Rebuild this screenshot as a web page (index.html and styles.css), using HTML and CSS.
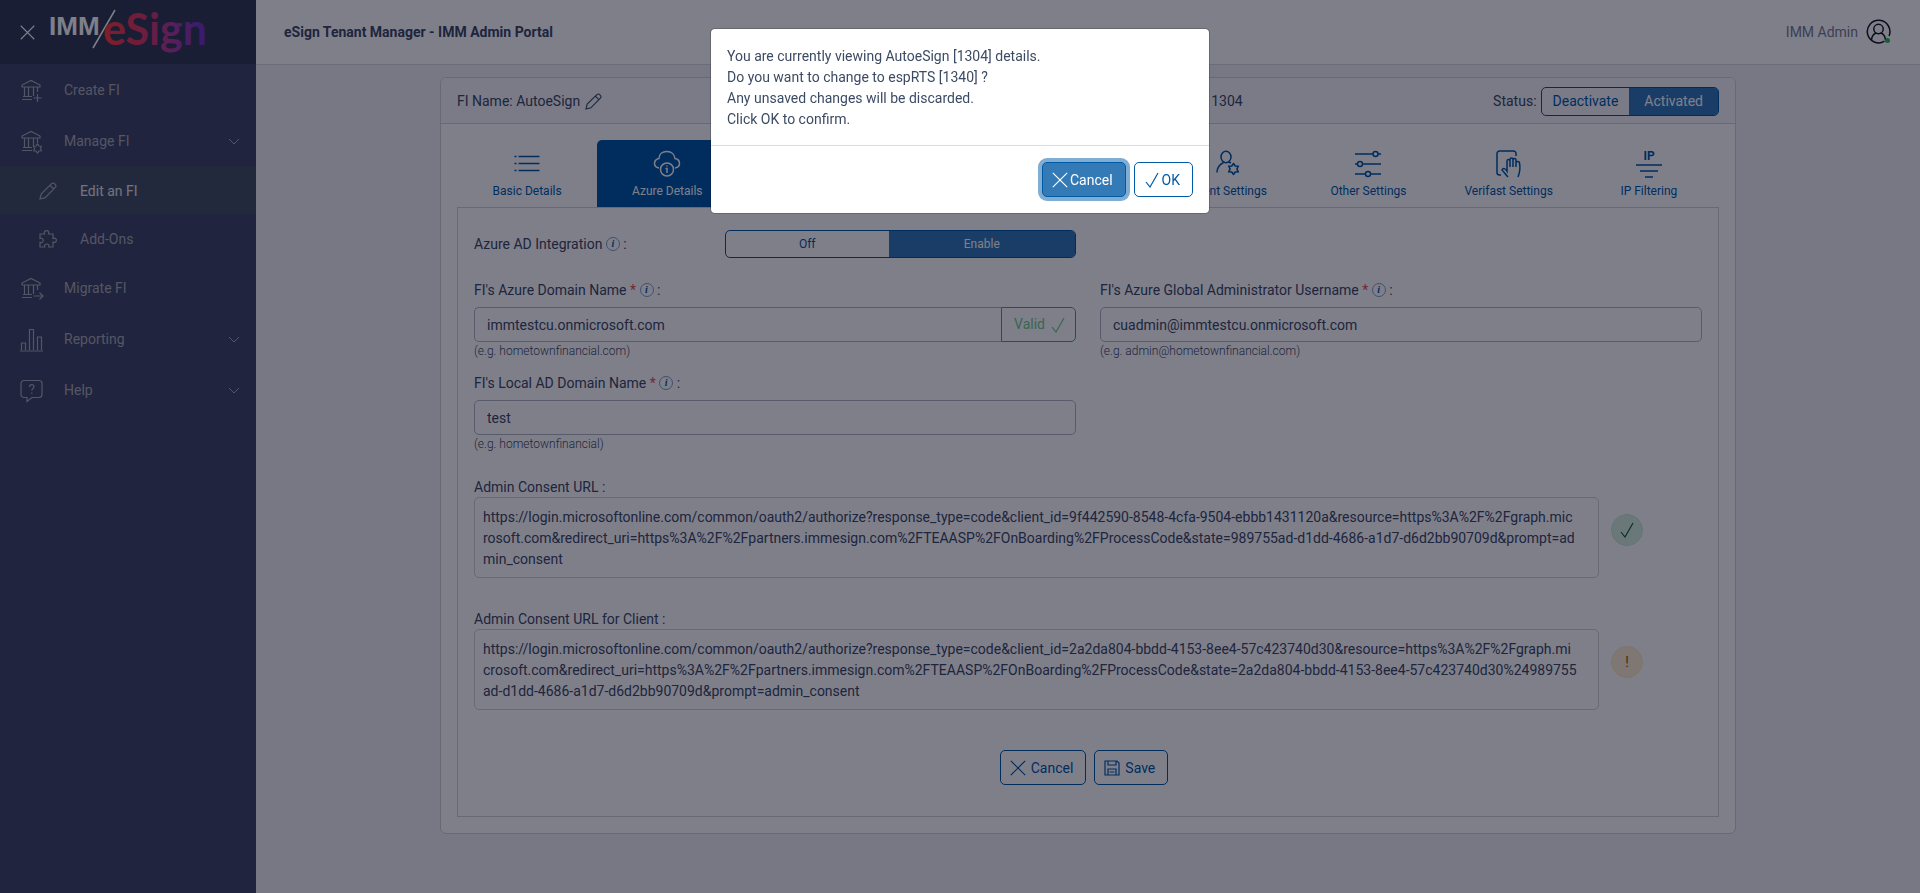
FILE: index.html
```html
<!DOCTYPE html>
<html lang="en">
<head>
<meta charset="utf-8">
<title>eSign Tenant Manager - IMM Admin Portal</title>
<link rel="stylesheet" href="styles.css">
</head>
<body>
<svg class="sprite" aria-hidden="true">
  <symbol id="bank" viewBox="0 0 24 24"><path d="M2 7.500V6L11 1.500 20 6v2H2zM4.500 8v9M8.500 8v9M13.500 8v9M17.500 8v5M2 20.500h10M3 17.500h9"/></symbol>
  <symbol id="gear" viewBox="-6 -6 12 12"><path d="M0-5L1.600-2.800 4.300-2.500 3.200 0 4.300 2.500 1.600 2.800 0 5-1.600 2.800-4.300 2.500-3.200 0-4.300-2.500-1.600-2.800z"/></symbol>
  <symbol id="pencil" viewBox="0 0 18 18"><path d="M1 17l1.300-5.200L12.600 1.700a2 2 0 0 1 2.900 0l.8.800a2 2 0 0 1 0 2.900L6.200 15.700zM11 3.300l3.700 3.700"/></symbol>
  <symbol id="cross" viewBox="0 0 16 16"><path d="M.8.8l14.400 14.400M15.200.8L.8 15.200"/></symbol>
  <symbol id="check" viewBox="0 0 16 16"><path d="M2 10l4 5L14 1"/></symbol>
  <symbol id="chevron" viewBox="0 0 12 8"><path d="M1 1l5 5 5-5"/></symbol>
</svg>
<div class="app">
  <aside class="sidebar">
    <div class="brand">
      <button class="icon-button" type="button" aria-label="Close menu"><svg class="icon icon-close"><use href="#cross"/></svg></button>
      <svg class="logo" viewBox="0 0 160 64" role="img" aria-label="IMM eSign">
        <defs><linearGradient id="g" gradientUnits="userSpaceOnUse" x1="56" y1="0" x2="156" y2="0"><stop offset="0" stop-color="#ff3d3d"/><stop offset=".35" stop-color="#dc3a63"/><stop offset=".65" stop-color="#b0409e"/><stop offset="1" stop-color="#6a35d0"/></linearGradient></defs>
        <text class="logo-imm" x="-2" y="35">IMM</text>
        <path class="logo-slash" d="M64 10L42 48"/>
        <text class="logo-esign" x="52" y="45" fill="url(#g)">eSign</text>
      </svg>
    </div>
    <nav class="menu">
      <a class="menu-item" href="#"><svg class="icon menu-icon" viewBox="0 0 24 24"><use href="#bank"/><path d="M17.500 15v8M13.500 19h8"/></svg><span>Create FI</span></a>
      <a class="menu-item" href="#"><svg class="icon menu-icon" viewBox="0 0 24 24"><use href="#bank"/><use href="#gear" x="12" y="13" width="11" height="11"/></svg><span>Manage FI</span><svg class="icon chevron"><use href="#chevron"/></svg></a>
      <a class="menu-item sub active" href="#"><svg class="icon sub-icon"><use href="#pencil"/></svg><span>Edit an FI</span></a>
      <a class="menu-item sub" href="#"><svg class="icon sub-icon" viewBox="0 0 18 18"><path d="M1 4h4.500C4.500 1.500 6 .6 7.500.6S10.500 1.500 9.500 4H14v4.500c2.500-1 3.400.5 3.400 1.700S16.500 13 14 12v5H9.800c.8-2-.5-3-2-3s-3 1-2 3H1v-4.700c2 .8 3.200-.4 3.200-1.900S3 7.700 1 8.500z"/></svg><span>Add-Ons</span></a>
      <a class="menu-item" href="#"><svg class="icon menu-icon" viewBox="0 0 24 24"><use href="#bank"/><path d="M13.500 19h9M19.500 15.500L23 19l-3.500 3.500"/></svg><span>Migrate FI</span></a>
      <a class="menu-item" href="#"><svg class="icon menu-icon" viewBox="0 0 24 24"><path d="M0 23h23M1.500 22v-7h4v7M9.500 22V1.500h4V22M17.500 22V9h4v13"/></svg><span>Reporting</span><svg class="icon chevron"><use href="#chevron"/></svg></a>
      <a class="menu-item" href="#"><svg class="icon menu-icon" viewBox="0 0 24 24"><path d="M4 1.500h15a3 3 0 0 1 3 3v11a3 3 0 0 1-3 3h-7l-5 4v-4H4a3 3 0 0 1-3-3v-11a3 3 0 0 1 3-3zM9.500 8c0-3.400 4.500-3 4.500-.5 0 2-2.200 2-2.200 4M11.800 13.500V15"/></svg><span>Help</span><svg class="icon chevron"><use href="#chevron"/></svg></a>
    </nav>
  </aside>
  <div class="main">
    <header class="topbar">
      <h1 class="title">eSign Tenant Manager - IMM Admin Portal</h1>
      <div class="user"><span>IMM Admin</span>
        <svg class="avatar" viewBox="0 0 26 26"><path d="M18.500 22.200A11.300 11.300 0 1 1 23 17"/><circle cx="12.500" cy="10" r="4.700"/><path d="M5.500 21c.5-4.500 2.500-6.500 5-7M19.500 21c-.5-4.500-2.500-6.500-5-7"/><circle class="online" cx="21.500" cy="21.500" r="2.500"/></svg>
      </div>
    </header>
    <main class="content">
      <section class="card">
        <div class="card-head">
          <div class="fi-name">FI Name: AutoeSign <svg class="icon pencil"><use href="#pencil"/></svg></div>
          <div class="fi-id">FI ID: 1304</div>
          <div class="status"><span>Status:</span>
            <div class="toggle"><button type="button">Deactivate</button><button type="button" class="on">Activated</button></div>
          </div>
        </div>
        <div class="card-body">
          <div class="tabs">
            <button type="button" class="tab"><svg class="icon tab-icon" viewBox="0 0 28 28"><path d="M5.500 6.500H26.500M5.500 13.500H26.500M5.500 20.500H26.500M1.500 6.500h2M1.500 13.500h2M1.500 20.500h2"/></svg>Basic Details</button>
            <button type="button" class="tab selected"><svg class="icon tab-icon" viewBox="0 0 28 28"><path d="M6 18C3.500 17.500 1.500 16 1.500 13.500c0-2.500 2-4.500 4.500-5C6 4 9.500 1.500 14 1.500s7.500 3 8 7c3 .5 4.500 2.500 4.500 5 0 2.500-2 4-4.500 4.500"/><circle cx="14" cy="19.500" r="6.500"/><path d="M12.500 18.500H14V23M14 15.500v1"/></svg>Azure Details</button>
            <span class="tab-gap"></span>
            <button type="button" class="tab"><svg class="icon tab-icon" viewBox="0 0 28 28"><ellipse cx="12" cy="7" rx="5" ry="5.700"/><path d="M9.500 12.500c-4 2-6.500 5-6.500 10M14.500 12l2.500 1"/><use href="#gear" x="13" y="12.500" width="13" height="13"/></svg>Client Settings</button>
            <button type="button" class="tab"><svg class="icon tab-icon" viewBox="0 0 28 28"><path d="M1 4h18M24 4h3M1 14h2.500M8.500 14H27M1 24h10.500M16.500 24H27"/><circle cx="21.500" cy="4" r="2.500"/><circle cx="6" cy="14" r="2.500"/><circle cx="14" cy="24" r="2.500"/></svg>Other Settings</button>
            <button type="button" class="tab"><svg class="icon tab-icon" viewBox="0 0 28 28"><path d="M6 25H4.500A2.500 2.500 0 0 1 2 22.500V3.500A2.500 2.500 0 0 1 4.500 1h14A2.500 2.500 0 0 1 21 3.500V6M13 27c-2-2-4-5-6-7 1-2.500 3.500-1.500 5 1V11c0-2 3-2 3 0v6V9.500c0-2 3-2 3 0V17v-7c0-2 3-2 3 0v7-4c0-2 3.500-2 3.500 0 1 5 .5 9-1.500 14"/></svg>Verifast Settings</button>
            <button type="button" class="tab"><svg class="icon tab-icon" viewBox="0 0 28 28"><text class="ip" x="14" y="10" text-anchor="middle">IP</text><path d="M1 15h26M5 21h18M10 27h8"/></svg>IP Filtering</button>
          </div>
          <form class="panel">
            <div class="grid">
              <div class="integration"><span>Azure AD Integration <i class="info">i</i> :</span>
                <div class="toggle wide"><button type="button">Off</button><button type="button" class="on">Enable</button></div>
              </div>
              <div class="field first">
                <label for="domain">FI's Azure Domain Name <b>*</b> <i class="info">i</i> :</label>
                <div class="group"><input id="domain" type="text" value="immtestcu.onmicrosoft.com"><button type="button" class="valid">Valid <svg class="icon mark"><use href="#check"/></svg></button></div>
                <small>(e.g. hometownfinancial.com)</small>
              </div>
              <div class="field">
                <label for="admin">FI's Azure Global Administrator Username <b>*</b> <i class="info">i</i> :</label>
                <input id="admin" type="text" value="cuadmin@immtestcu.onmicrosoft.com">
                <small>(e.g. admin@hometownfinancial.com)</small>
              </div>
              <div class="field first">
                <label for="local">FI's Local AD Domain Name <b>*</b> <i class="info">i</i> :</label>
                <input id="local" type="text" value="test">
                <small>(e.g. hometownfinancial)</small>
              </div>
            </div>
            <div class="consent">
              <div class="consent-label">Admin Consent URL :</div>
              <div class="consent-row">
                <div class="url">https://login.microsoftonline.com/common/oauth2/authorize?response_type=code&amp;client_id=9f442590-8548-4cfa-9504-ebbb1431120a&amp;resource=https%3A%2F%2Fgraph.mic<br>rosoft.com&amp;redirect_uri=https%3A%2F%2Fpartners.immesign.com%2FTEAASP%2FOnBoarding%2FProcessCode&amp;state=989755ad-d1dd-4686-a1d7-d6d2bb90709d&amp;prompt=ad<br>min_consent</div>
                <span class="badge ok"><svg class="icon mark"><use href="#check"/></svg></span>
              </div>
            </div>
            <div class="consent">
              <div class="consent-label">Admin Consent URL for Client :</div>
              <div class="consent-row">
                <div class="url">https://login.microsoftonline.com/common/oauth2/authorize?response_type=code&amp;client_id=2a2da804-bbdd-4153-8ee4-57c423740d30&amp;resource=https%3A%2F%2Fgraph.mi<br>crosoft.com&amp;redirect_uri=https%3A%2F%2Fpartners.immesign.com%2FTEAASP%2FOnBoarding%2FProcessCode&amp;state=2a2da804-bbdd-4153-8ee4-57c423740d30%24989755<br>ad-d1dd-4686-a1d7-d6d2bb90709d&amp;prompt=admin_consent</div>
                <span class="badge warn">!</span>
              </div>
            </div>
            <div class="actions">
              <button type="button" class="btn"><svg class="icon mark"><use href="#cross"/></svg>Cancel</button>
              <button type="button" class="btn"><svg class="icon mark" viewBox="0 0 16 16"><path d="M1 1h12l2 2v12H1zM4 1v4h8V1M4 15V9h8v6M5.500 12h5"/></svg>Save</button>
            </div>
          </form>
        </div>
      </section>
    </main>
  </div>
</div>
<div class="backdrop">
  <div class="modal" role="dialog" aria-modal="true" aria-labelledby="question">
    <p class="modal-body" id="question">You are currently viewing AutoeSign [1304] details.<br>Do you want to change to espRTS [1340] ?<br>Any unsaved changes will be discarded.<br>Click OK to confirm.</p>
    <div class="modal-foot">
      <button type="button" class="btn tight focus"><svg class="icon mark"><use href="#cross"/></svg>Cancel</button>
      <button type="button" class="btn tight"><svg class="icon mark"><use href="#check"/></svg>OK</button>
    </div>
  </div>
</div>
</body>
</html>
```
FILE: styles.css
```css
* { box-sizing: border-box; }

body {
  margin: 0;
  font: 14px/21px Roboto, "Liberation Sans", sans-serif;
  color: #3c4b64;
  background: #f0f0f4;
}

button, input { font: inherit; color: inherit; }
button { cursor: pointer; }
a { color: inherit; text-decoration: none; }
.sprite { display: none; }
.icon { fill: none; stroke: currentColor; stroke-width: 1.200; flex: none; }

.app { display: flex; min-height: 100vh; }

/* Sidebar */
.sidebar { width: 256px; flex: none; background: #404866; color: #aaacb4; }
.brand { height: 64px; display: flex; align-items: center; gap: 16px; padding-left: 20px; background: #323c53; color: #fff; }
.icon-button { display: flex; padding: 0; border: 0; background: none; }
.icon-close { width: 15px; height: 15px; }
.logo { width: 160px; height: 64px; overflow: visible; }
.logo-imm { font: 700 26px "Liberation Sans", sans-serif; fill: #fff; }
.logo-esign { font: 700 43px Lato, sans-serif; }
.logo-slash { stroke: #fff; stroke-width: 1.500; }
.menu-item { display: flex; align-items: center; gap: 20px; height: 51px; padding: 2px 16px 0 20px; }
.menu-icon { width: 24px; height: 24px; }
.chevron { width: 12px; height: 8px; margin-left: auto; stroke-width: 1; }
.menu-item.sub { height: 48px; padding-left: 39px; gap: 23px; }
.menu-item.active { background: #465265; color: #e6e6ea; }
.sub-icon { width: 18px; height: 18px; color: #aaacb4; }

/* Header */
.main { flex: 1; min-width: 0; }
.topbar { display: flex; justify-content: space-between; align-items: center; height: 65px; padding: 0 28px; background: #fff; border-bottom: 1px solid #d8dbe0; }
.title { margin: 0; font-size: 14px; font-weight: 700; }
.user { display: flex; align-items: center; gap: 8px; color: #768192; }
.avatar { width: 26px; height: 26px; fill: none; stroke: #181b1e; stroke-width: 1.500; }
.avatar .online { fill: #2eb85c; stroke: none; }

/* Card */
.content { padding: 12px 30px 60px; }
.card { max-width: 1296px; margin: 0 auto; background: #fff; border: 1px solid #d0d1d8; border-radius: 6px; }
.card-head { display: flex; align-items: center; height: 46px; padding: 1px 16px 0; background: #f7f7f9; border-bottom: 1px solid #d0d1d8; border-radius: 6px 6px 0 0; }
.fi-name { flex: 57; display: flex; align-items: center; gap: 5px; }
.fi-id { flex: 25; }
.status { flex: 18; display: flex; align-items: center; justify-content: flex-end; gap: 4px; }
.pencil { width: 17px; height: 17px; }
.toggle { display: flex; border: 1px solid #005ba7; border-radius: 5px; overflow: hidden; }
.toggle button { height: 27px; padding: 0 11px; border: 0; background: none; color: #005ba7; }
.toggle button.on { background: #337ab7; color: #fff; padding: 0 15px; }
.toggle.wide { width: 351px; font-size: 12px; }
.toggle.wide button { flex: 1; height: 26px; padding: 0; }
.toggle.wide button.on { flex: 1 0 24px; padding: 0; }

.card-body { padding: 16px; }
.tabs { display: flex; }
.tab { flex: 1 1 0; display: flex; flex-direction: column; align-items: center; gap: 4px; height: 67px; padding: 10px 0 8px; border: 0; border-radius: 5px 5px 0 0; background: none; color: #005ba7; font-size: 12px; line-height: 18px; }
.tab-gap { flex: 3 1 0; }
.tab.selected { background: #005ba7; color: #fff; }
.tab-icon { width: 28px; height: 28px; stroke-width: 1.500; }
.ip { font: 700 12px Roboto, sans-serif; fill: currentColor; stroke: none; }

/* Form */
.panel { display: block; border: 1px solid #d0d1d8; padding: 22px 16px 31px; }
.grid { display: grid; grid-template-columns: 1fr 1fr; column-gap: 24px; }
.integration { display: flex; align-items: center; justify-content: space-between; margin-bottom: 22px; }
.field { display: flex; flex-direction: column; margin-bottom: 13px; }
.field.first { grid-column: 1; }
.field label { margin-bottom: 6px; }
.field b { color: #e55353; font-weight: 400; }
.field input { width: 100%; height: 35px; padding: 0 12px; border: 1px solid #b1b7c1; border-radius: 5px; background: #fff; }
.field small { font-size: 12px; line-height: 18px; font-weight: 300; }
.info { display: inline-block; width: 14px; height: 14px; border: 1px solid #7ba4c0; border-radius: 50%; color: #005ba7; font: italic 700 10px/12px "Liberation Serif", serif; text-align: center; vertical-align: 2px; }
.group { display: flex; }
.group input { flex: 1; border-right: 0; border-radius: 5px 0 0 5px; }
.valid { display: flex; align-items: center; gap: 5px; padding: 0 9px 0 12px; border: 1px solid #2eb85c; border-radius: 0 5px 5px 0; background: none; color: #6fce8e; }
.mark { width: 16px; height: 16px; }
.consent { margin-bottom: 31px; }
.grid + .consent { margin-top: 11px; }
.consent-label { line-height: 20px; }
.consent-row { display: flex; align-items: flex-start; gap: 12px; }
.url { flex: 1; padding: 9px 8px 7px; border: 1px solid #d0d1d8; border-radius: 5px; word-break: break-all; }
.badge { width: 32px; height: 32px; margin: 17px 59px 0 0; border-radius: 50%; display: flex; align-items: center; justify-content: center; flex: none; }
.badge.ok { background: #d5f1de; color: #18603a; border: 1px solid #c4ebd1; }
.badge.warn { background: #feefd0; color: #815c15; border: 1px solid #fde9bd; }
.actions { display: flex; justify-content: center; gap: 8px; margin: 40px 8px 0 0; }
.btn { display: flex; align-items: center; gap: 5px; height: 35px; padding: 1px 12px 0 9px; border: 1px solid #005ba7; border-radius: 5px; background: none; color: #005ba7; }

/* Dialog */
.backdrop { position: fixed; inset: 0; background: rgba(0, 0, 21, .5); }
.modal { width: 500px; margin: 28px auto; background: #fff; background-clip: padding-box; border: 1px solid rgba(0, 0, 21, .2); border-radius: 5px; }
.modal-body { margin: 0; padding: 17px 16px 15px; }
.modal-foot { display: flex; justify-content: flex-end; gap: 8px; padding: 16px; border-top: 1px solid #d8dbe0; }
.btn.tight { gap: 2px; }
.btn.focus { background: #337ab7; color: #fff; box-shadow: 0 0 0 4px #80add3; }
```
